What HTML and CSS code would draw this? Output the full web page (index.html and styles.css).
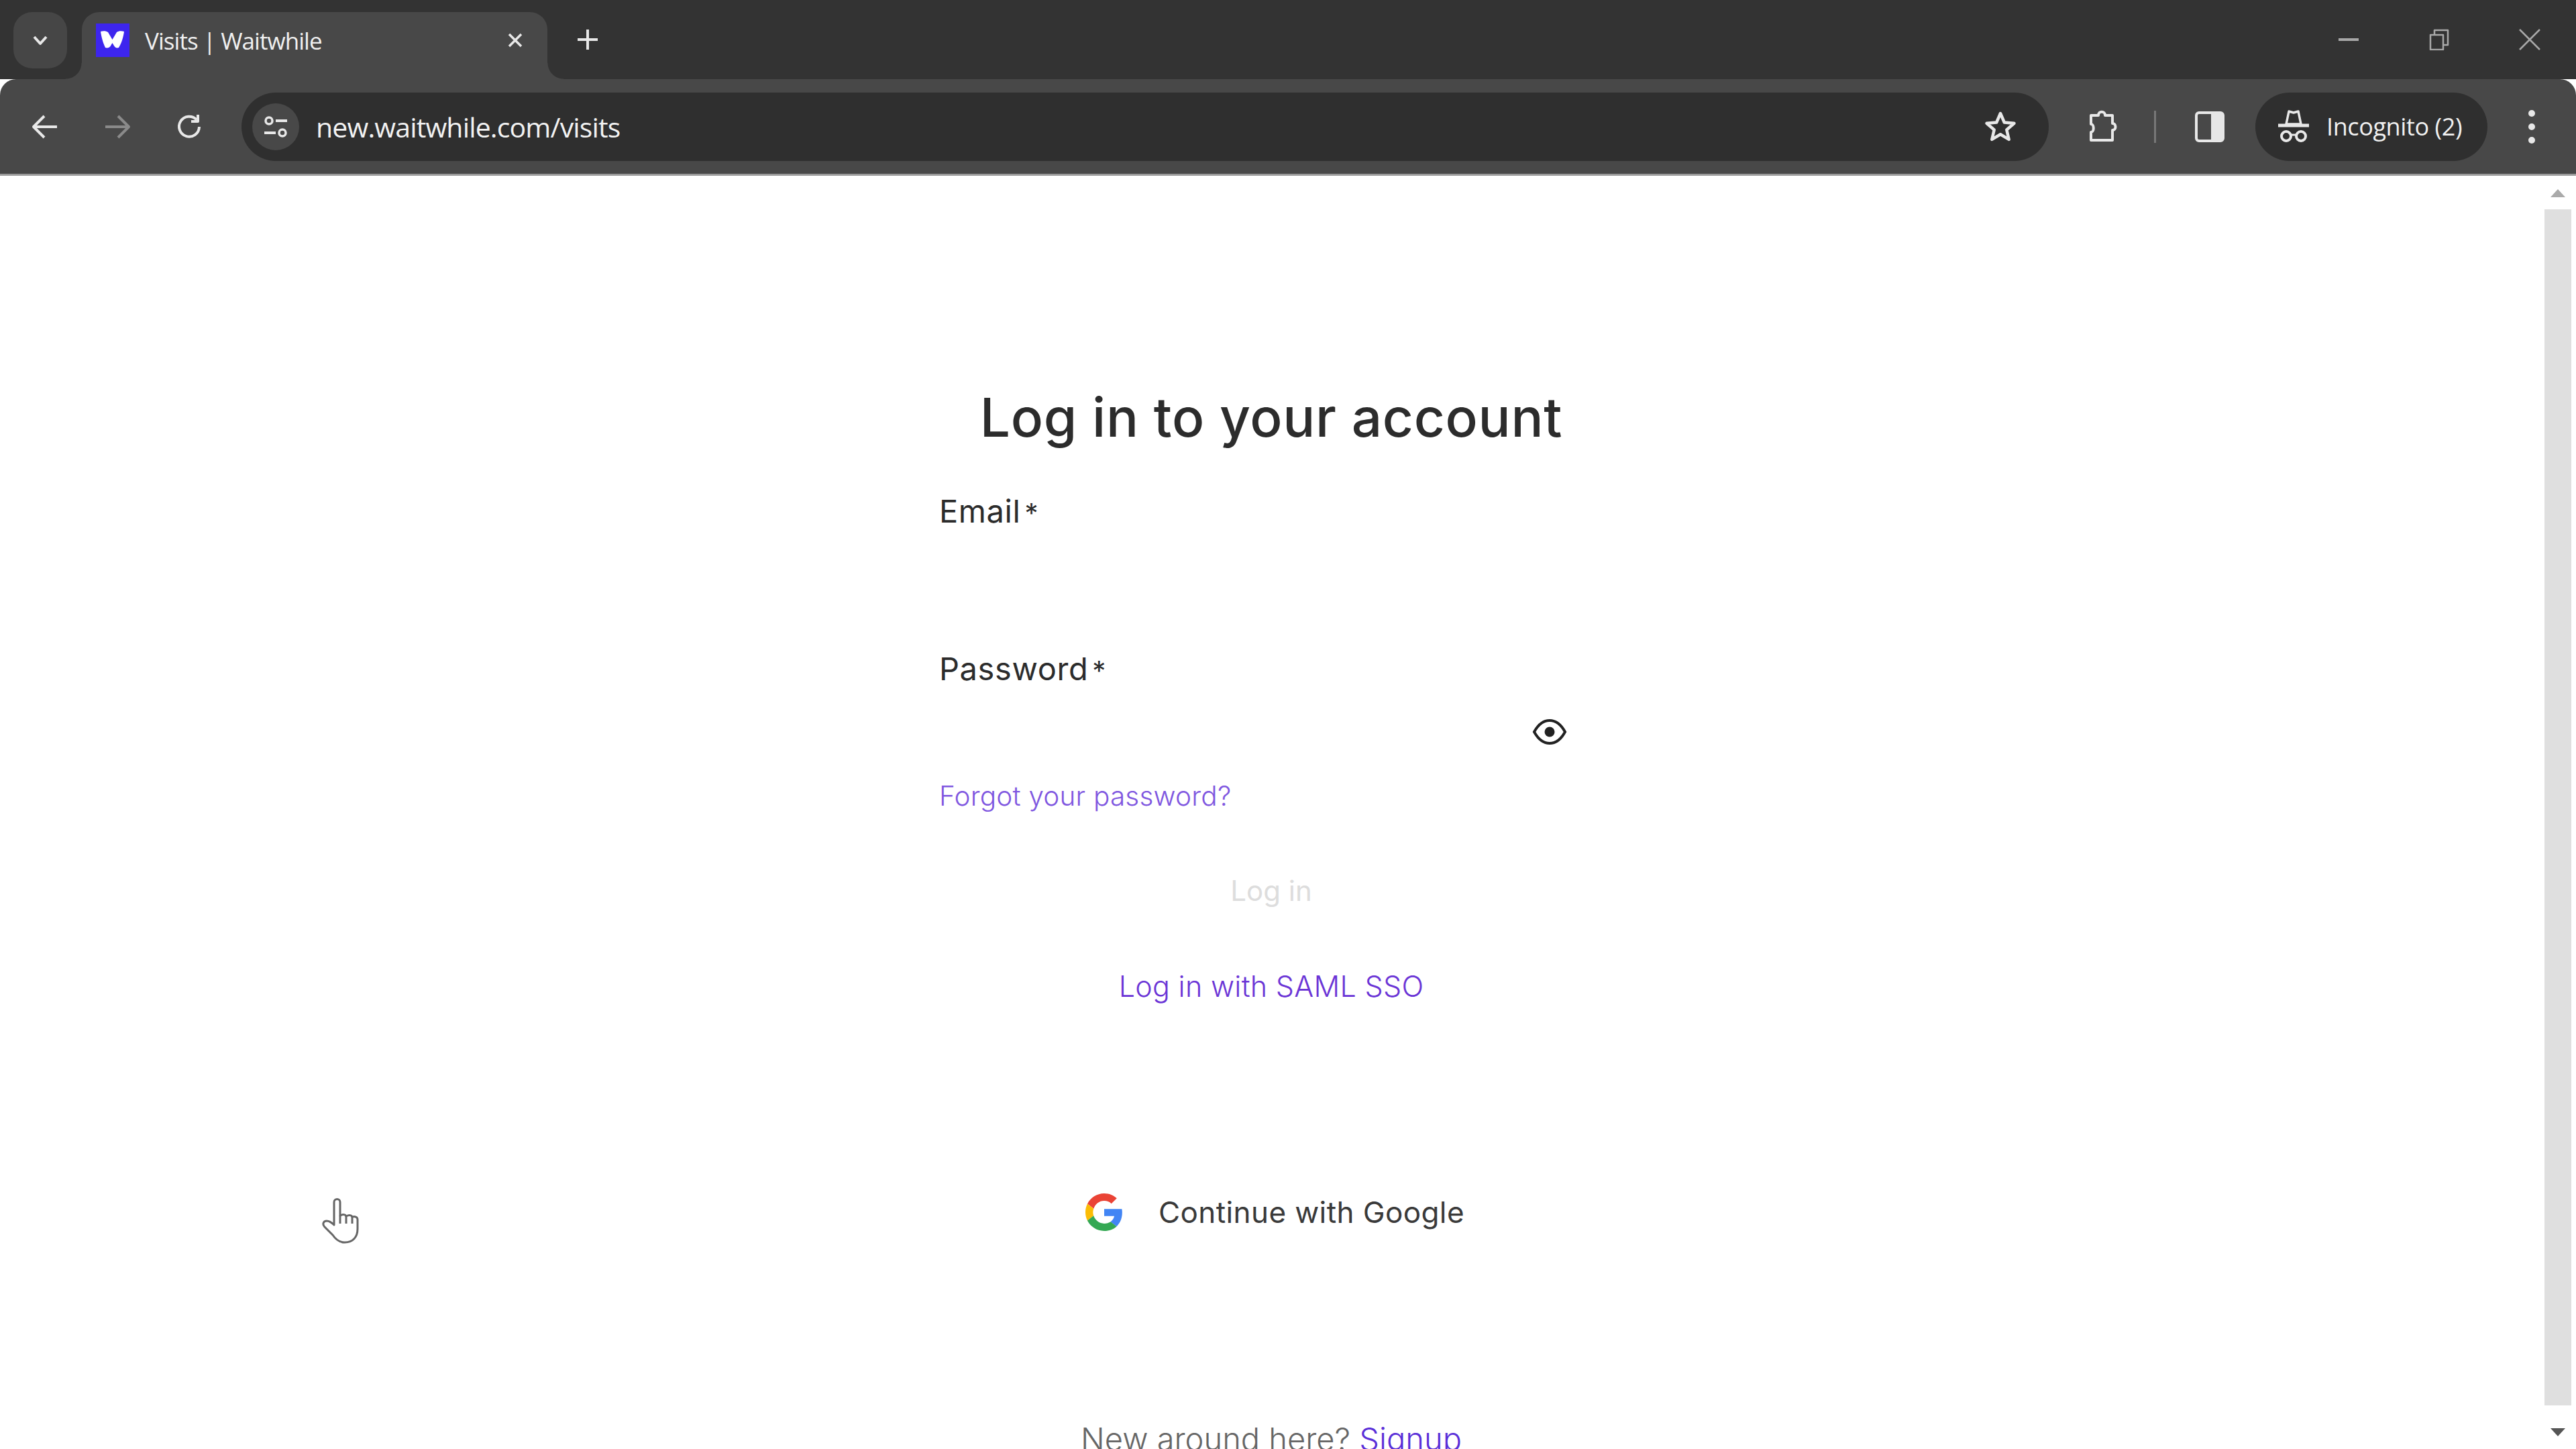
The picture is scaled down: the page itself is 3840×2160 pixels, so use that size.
FILE: index.html
```html
<!DOCTYPE html>
<html lang="en">
<head>
    <meta charset="UTF-8">
    <title>Visits | Waitwhile</title>
    <link rel="stylesheet" href="styles.css">
</head>
<body>
    <div class="browser">
        <div class="tabstrip">
            <div class="tab-search">
                <svg width="24" height="24" viewBox="0 0 24 24"><path d="M3 7l9 10 9-10" class="line" stroke-width="4"/></svg>
            </div>
            <div class="tab">
                <svg class="favicon" viewBox="0 0 50 50">
                    <rect width="50" height="50" fill="#3d25ee"/>
                    <path d="M7 12c4-1 8-1 11 1l6.500 11L31 13c3-2 7-2 11-1-1 8-4 18-8 24-3 1-5 0-6.500-2l-3-5-3 5c-1.500 2-4.500 3-7.500 2-3-6-6-16-7-24z" fill="#fff"/>
                </svg>
                <span class="tab-title">Visits | Waitwhile</span>
                <svg class="tab-close" width="26" height="26" viewBox="0 0 26 26"><path d="M4 4l18 18M22 4L4 22" class="line" stroke-width="3.5"/></svg>
            </div>
            <svg class="new-tab" width="34" height="34" viewBox="0 0 34 34"><path d="M17 2v30M2 17h30" class="line" stroke-width="4"/></svg>
            <div class="window-controls">
                <svg width="32" height="32" viewBox="0 0 32 32"><path d="M1 16h30" class="line dim" stroke-width="4"/></svg>
                <svg width="32" height="32" viewBox="0 0 32 32"><path d="M3 9h19v22H3zM9 9V2h20v22h-7" class="line dim" stroke-width="2.5"/></svg>
                <svg width="32" height="32" viewBox="0 0 32 32"><path d="M1 1l30 30M31 1L1 31" class="line dim" stroke-width="2.5"/></svg>
            </div>
        </div>

        <div class="toolbar">
            <div class="nav-buttons">
                <svg width="40" height="40" viewBox="0 0 40 40"><path d="M38 20H4M19 4L3 20l16 16" class="line" stroke-width="4"/></svg>
                <svg width="40" height="40" viewBox="0 0 40 40"><path d="M2 20h34M21 4l16 16-16 16" class="line faded" stroke-width="4"/></svg>
                <svg width="40" height="40" viewBox="0 0 40 40"><path d="M34 20a15 15 0 1 1-4-10.500M32 2v10H22" class="line" stroke-width="4"/></svg>
            </div>
            <div class="omnibox">
                <div class="site-info">
                    <svg width="38" height="38" viewBox="0 0 38 38"><circle cx="9" cy="10" r="5" class="line" stroke-width="3.5"/><path d="M19 10h17M2 28h17" class="line" stroke-width="4"/><circle cx="29" cy="28" r="5" class="line" stroke-width="3.500"/></svg>
                </div>
                <span class="url">new.waitwhile.com/visits</span>
                <svg class="star" width="48" height="48" viewBox="0 0 48 48"><path d="M24 4l5.800 13.500 14.700 1.300-11.200 9.700 3.400 14.400L24 35.300 11.300 42.900l3.400-14.400L3.500 18.800l14.700-1.300z" class="line" stroke-width="4.500"/></svg>
            </div>
            <svg class="extensions" width="52" height="52" viewBox="0 0 52 52"><path d="M8 9h11c0-7 10-7 10 0h11v12c6 0 6 10 0 10v15H8V34c5 0 5-12 0-12z" class="line" stroke-width="4"/></svg>
            <span class="toolbar-sep"></span>
            <svg class="side-panel" width="44" height="46" viewBox="0 0 44 46"><rect x="2" y="2" width="40" height="42" rx="4" class="line" stroke-width="4"/><rect x="24" y="2" width="18" height="42" fill="#e6e6e6"/></svg>
            <div class="incognito">
                <svg width="48" height="52" viewBox="0 0 48 52">
                    <path d="M13 22l4-19 7 2 7-2 4 19z" class="line" stroke-width="3.500"/>
                    <path d="M1 24h46" class="line" stroke-width="5"/>
                    <circle cx="13" cy="40" r="7" class="line" stroke-width="4"/>
                    <circle cx="35" cy="40" r="7" class="line" stroke-width="4"/>
                    <path d="M20 38h8" class="line" stroke-width="3"/>
                </svg>
                <span>Incognito (2)</span>
            </div>
            <div class="menu-dots"><i></i><i></i><i></i></div>
        </div>

        <div class="viewport">
            <main class="page">
                <h1>Log in to your account</h1>
                <form class="login-form">
                    <div class="field email-field">
                        <label>Email<span class="req">*</span></label>
                    </div>
                    <div class="field password-field">
                        <label>Password<span class="req">*</span></label>
                        <svg class="eye" width="52" height="40" viewBox="0 0 52 40">
                            <path d="M3 20C9 9 17 3 26 3s17 6 23 17c-6 11-14 17-23 17S9 31 3 20z" fill="none" stroke="#222" stroke-width="4"/>
                            <circle cx="26" cy="20" r="7.500" fill="#222"/>
                        </svg>
                    </div>
                    <a class="forgot">Forgot your password?</a>
                    <div class="login-btn">Log in</div>
                    <a class="saml">Log in with SAML SSO</a>
                    <div class="google-btn">
                        <svg width="56" height="56" viewBox="0 0 48 48">
                            <path fill="#ea4335" d="M24 9.500c3.500 0 6.700 1.200 9.200 3.600l6.900-6.900C35.900 2.400 30.500 0 24 0 14.600 0 6.500 5.400 2.600 13.200l8 6.200C12.400 13.700 17.700 9.500 24 9.500z"/>
                            <path fill="#4285f4" d="M47 24.500c0-1.600-.1-3.100-.4-4.500H24v9h12.900c-.6 3-2.200 5.500-4.800 7.200l7.700 6C44.400 37.900 47 31.800 47 24.500z"/>
                            <path fill="#fbbc05" d="M10.500 28.600c-.5-1.500-.8-3-.8-4.600s.3-3.100.8-4.600l-8-6.200C.9 16.400 0 20.100 0 24s.9 7.600 2.600 10.800z"/>
                            <path fill="#34a853" d="M24 48c6.500 0 11.900-2.100 15.900-5.800l-7.700-6c-2.200 1.400-4.900 2.300-8.200 2.300-6.300 0-11.600-4.200-13.500-9.900l-8 6.200C6.500 42.600 14.600 48 24 48z"/>
                        </svg>
                        <span>Continue with Google</span>
                    </div>
                    <p class="signup">New around here? <a>Signup</a></p>
                </form>
            </main>
            <div class="scrollbar">
                <span class="arrow-up"></span>
                <span class="thumb"></span>
                <span class="arrow-down"></span>
            </div>
        </div>

        <svg class="hand-cursor" width="60" height="72" viewBox="0 0 60 72">
            <path d="M20 42V8c0-6 9-6 9 0v20c4-2 8-2 9 1 4-2 8-2 9 1 4-1 8 0 8 4v14c0 12-7 20-19 20-9 0-14-5-18-11L6 45c-4-4-2-9 3-9 4 0 8 3 11 6z" fill="#fff" stroke="#666" stroke-width="3" stroke-linejoin="round"/>
            <path d="M29 28v12M38 29v11M47 30v10" fill="none" stroke="#666" stroke-width="3"/>
        </svg>
    </div>
</body>
</html>
```

FILE: styles.css
```css
* {
    box-sizing: border-box;
}
html, body {
    margin: 0;
    height: 100%;
    overflow: hidden;
}
body {
    background-color: white;
    font-family: 'Inter', 'Noto Sans', sans-serif;
}
.browser {
    position: relative;
    display: flex;
    flex-direction: column;
    width: 3840px;
    height: 2160px;
    overflow: hidden;
}
.line {
    fill: none;
    stroke: #e8e8e8;
    stroke-linejoin: round;
}
.line.dim {
    stroke: #a8a8a8;
}
.line.faded {
    stroke: #8a8a8a;
}

/* tab strip */
.tabstrip {
    display: flex;
    align-items: flex-end;
    height: 118px;
    padding-left: 20px;
    background-color: #333333;
}
.tab-search {
    display: flex;
    align-items: center;
    justify-content: center;
    width: 80px;
    height: 84px;
    margin-bottom: 16px;
    border-radius: 28px;
    background-color: #464646;
}
.tab {
    position: relative;
    display: flex;
    align-items: center;
    width: 694px;
    height: 100px;
    margin-left: 22px;
    padding: 0 35px 16px 21px;
    border-radius: 26px 26px 0 0;
    background-color: #484848;
}
.tab::before,
.tab::after {
    content: '';
    position: absolute;
    bottom: 0;
    width: 24px;
    height: 24px;
}
.tab::before {
    left: -24px;
    background: radial-gradient(circle at 0 0, #333333 23px, #484848 24px);
}
.tab::after {
    right: -24px;
    background: radial-gradient(circle at 100% 0, #333333 23px, #484848 24px);
}
.favicon {
    width: 50px;
    height: 50px;
}
.tab-title {
    margin-left: 23px;
    color: #f0f0f0;
    font-family: 'Open Sans', sans-serif;
    font-size: 35px;
    letter-spacing: -0.95px;
    white-space: nowrap;
}
.tab-close {
    margin-left: auto;
}
.new-tab {
    align-self: center;
    margin-left: 43px;
}
.window-controls {
    display: flex;
    align-self: center;
    gap: 103px;
    margin-left: auto;
    margin-right: 53px;
}

/* toolbar */
.toolbar {
    display: flex;
    align-items: center;
    height: 144px;
    padding-left: 47px;
    border-bottom: 3px solid #9a9a9a;
    border-radius: 24px 24px 0 0;
    background-color: #484848;
}
.nav-buttons {
    display: flex;
    gap: 68px;
    width: 313px;
}
.omnibox {
    display: flex;
    align-items: center;
    width: 2694px;
    height: 102px;
    padding: 0 48px 0 16px;
    border-radius: 51px;
    background-color: #2f2f2f;
}
.site-info {
    display: flex;
    align-items: center;
    justify-content: center;
    width: 70px;
    height: 70px;
    border-radius: 50%;
    background-color: #484848;
}
.url {
    margin-left: 25px;
    color: #f2f2f2;
    font-family: 'Open Sans', sans-serif;
    font-size: 41px;
    letter-spacing: -0.85px;
}
.star {
    margin-left: auto;
}
.extensions {
    margin-left: 55px;
}
.toolbar-sep {
    width: 3px;
    height: 48px;
    margin-left: 50px;
    background-color: #777777;
}
.side-panel {
    margin-left: 58px;
}
.incognito {
    display: flex;
    align-items: center;
    width: 346px;
    height: 102px;
    margin-left: 46px;
    padding-left: 33px;
    border-radius: 51px;
    background-color: #2f2f2f;
    color: #f0f0f0;
    font-family: 'Open Sans', sans-serif;
    font-size: 36px;
    letter-spacing: -0.4px;
}
.incognito span {
    margin-left: 25px;
    white-space: nowrap;
}
.menu-dots {
    display: flex;
    flex-direction: column;
    gap: 10px;
    margin-left: 61px;
}
.menu-dots i {
    width: 10px;
    height: 10px;
    border-radius: 50%;
    background-color: #e8e8e8;
}

/* page */
.viewport {
    display: flex;
    flex: 1;
    min-height: 0;
}
.page {
    flex: 1;
    padding-top: 310px;
    color: #2c2c2c;
}
h1 {
    margin: 0;
    height: 100px;
    font-size: 80px;
    font-weight: 500;
    letter-spacing: 0.7px;
    line-height: 100px;
    text-align: center;
    white-space: nowrap;
}
.login-form {
    display: flex;
    flex-direction: column;
    width: 990px;
    margin: 0 auto;
    font-size: 47px;
}
.field {
    position: relative;
}
.field label {
    display: block;
    height: 60px;
    line-height: 60px;
    letter-spacing: 0.6px;
}
.req {
    margin-left: 6px;
    font-size: 40px;
}
.email-field {
    height: 235px;
    margin-top: 60px;
}
.password-field {
    height: 195px;
}
.eye {
    position: absolute;
    top: 104px;
    right: 54px;
}
.forgot {
    height: 50px;
    color: #7f57e0;
    font-size: 40.5px;
    font-weight: 300;
    letter-spacing: 0.2px;
    line-height: 50px;
}
.login-btn {
    height: 60px;
    margin-top: 86px;
    color: #dddddd;
    font-size: 42px;
    line-height: 60px;
    text-align: center;
}
.saml {
    height: 60px;
    margin-top: 82px;
    color: #6b35d6;
    font-size: 43px;
    font-weight: 300;
    letter-spacing: 0.3px;
    line-height: 60px;
    text-align: center;
}
.google-btn {
    display: flex;
    align-items: center;
    height: 60px;
    margin-top: 277px;
    padding-left: 218px;
}
.google-btn span {
    margin-left: 53px;
    font-size: 44px;
    color: #3a3a3a;
    letter-spacing: 0.4px;
}
.signup {
    margin: 278px 0 0;
    color: #666666;
    font-size: 47px;
    font-weight: 300;
    line-height: 60px;
    text-align: center;
    white-space: nowrap;
}
.signup a {
    color: #5a2fd8;
}

/* scrollbar */
.scrollbar {
    display: flex;
    flex-direction: column;
    align-items: center;
    width: 50px;
    padding: 20px 5px 0 0;
}
.arrow-up,
.arrow-down {
    width: 0;
    height: 0;
    border-left: 11px solid transparent;
    border-right: 11px solid transparent;
}
.arrow-up {
    border-bottom: 12px solid #aaaaaa;
}
.arrow-down {
    margin-top: 34px;
    border-top: 12px solid #555555;
}
.thumb {
    width: 40px;
    height: 1783px;
    flex: none;
    margin-top: 18px;
    background-color: #dfdfdf;
}

/* pointer from the recording, sits on top of the page */
.hand-cursor {
    position: absolute;
    left: 478px;
    top: 1784px;
}
```
